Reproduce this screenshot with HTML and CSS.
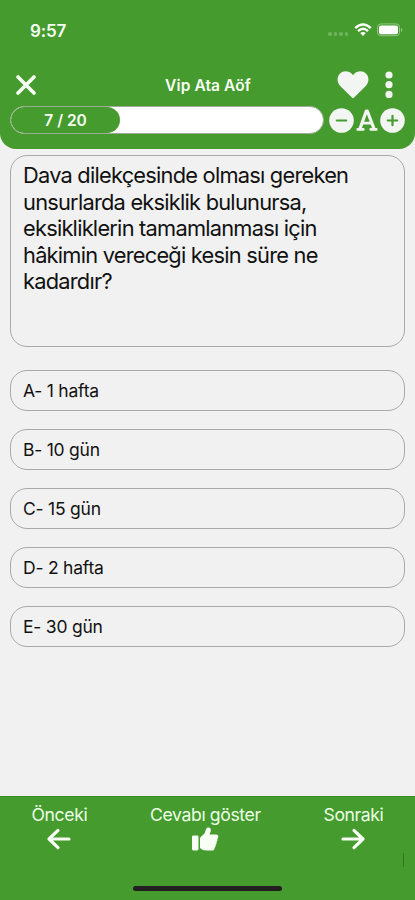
FILE: index.html
```html
<!DOCTYPE html>
<html lang="tr">
<head>
<meta charset="utf-8">
<meta name="viewport" content="width=device-width, initial-scale=1">
<title>Vip Ata Aöf</title>
<link rel="stylesheet" href="styles.css">
</head>
<body>
<div class="app">
  <header class="header">
    <div class="status">
      <span class="time">9:57</span>
      <span class="cell"><i></i><i></i><i></i><i></i></span>
      <svg class="wifi" width="18" height="14" viewBox="0 0 18 14" fill="none" stroke="#fff" stroke-width="2.400"><path d="M1.200 5.100Q9-2 16.800 5.100M4 8.100Q9 3.500 14 8.100"/><path d="M9 12.900L6.200 10.100Q9 7.900 11.800 10.100Z" fill="#fff" stroke="none"/></svg>
      <svg class="battery" width="26" height="14" viewBox="0 0 26 14"><rect x=".5" y=".9" width="22" height="11.800" rx="3.400" fill="none" stroke="#94c886"/><rect x="2" y="2.400" width="19" height="8.800" rx="2" fill="#fff"/><path d="M24 5v4q1.400-.6 1.400-2T24 5Z" fill="#94c886"/></svg>
    </div>
    <div class="titlebar">
      <svg class="close" width="20" height="20" viewBox="0 0 20 20" stroke="#f8fff5" stroke-width="3.600" stroke-linecap="round"><path d="M2 2L18 18M18 2L2 18"/></svg>
      <h1 class="title">Vip Ata Aöf</h1>
      <svg class="heart" width="32" height="28" viewBox="0 0 32 28" fill="#f3f5f2"><path d="M14.900 26.600L3.200 15C-.4 11.300-.2 5.800 3 2.600 6.600-.8 12-.2 15 3.100L16 4.200 17 3.100C20-.2 25.400-.8 29 2.600 32.200 5.800 32.400 11.300 28.800 15L17.100 26.600Q16 27.700 14.900 26.600Z"/></svg>
      <svg class="more" width="8" height="28" viewBox="0 0 8 28" fill="#f3f5f2"><circle cx="4" cy="4" r="3.600"/><circle cx="4" cy="13.700" r="3.600"/><circle cx="4" cy="23.400" r="3.600"/></svg>
    </div>
    <div class="tools">
      <div class="progress"><div class="fill" style="width:35%">7 / 20</div></div>
      <svg class="round" width="25" height="25" viewBox="0 0 25 25"><circle cx="12.500" cy="12.500" r="12.300" fill="#f3f5f2"/><path d="M7.800 12.500H17.200" stroke="#459b2e" stroke-width="2.200" stroke-linecap="round"/></svg>
      <svg class="font" width="22" height="22" viewBox="0 0 22 22" fill="none" stroke="#f3f5f2" stroke-linecap="round"><path d="M4 19.800L10.300 2H11.300L18 19.800" stroke-width="3.200" stroke-linejoin="round"/><path d="M1.700 20.400H7.300M14.700 20.400H20.300M6.500 14.200H15.500" stroke-width="2.700"/></svg>
      <svg class="round" width="25" height="25" viewBox="0 0 25 25"><circle cx="12.500" cy="12.500" r="12.300" fill="#f3f5f2"/><path d="M7.800 12.500H17.200M12.500 7.800V17.200" stroke="#459b2e" stroke-width="2.200" stroke-linecap="round"/></svg>
    </div>
  </header>
  <main class="main">
    <section class="question">Dava dilekçesinde olması gereken<br>unsurlarda eksiklik bulunursa,<br>eksikliklerin tamamlanması için<br>hâkimin vereceği kesin süre ne<br>kadardır?</section>
    <ul class="answers">
      <li>A- 1 hafta</li>
      <li>B- 10 gün</li>
      <li>C- 15 gün</li>
      <li>D- 2 hafta</li>
      <li>E- 30 gün</li>
    </ul>
  </main>
  <footer class="footer">
    <nav class="nav">
      <a class="prev"><span>Önceki</span><svg width="26" height="24" viewBox="0 0 26 24" fill="none" stroke="#f8fff5" stroke-width="3.200" stroke-linecap="round" stroke-linejoin="round"><path d="M23 12H3M12 3.400L3 12L12 20.600"/></svg></a>
      <a class="show"><span>Cevabı göster</span><svg width="28" height="24" viewBox="0 0 28 24" fill="#f8fff5"><rect x="1" y="8.500" width="6.500" height="15" rx="1.400"/><path d="M9 10.700L13.600 6.200 15.200 1.700Q16 .2 17.700.4C20 .8 20.300 3 19.500 5L18.500 7.400H25Q27.500 7.600 27.300 10C27.200 11 26.700 11.400 26.400 11.800Q26.900 13.600 25.600 14.900 26 16.500 24.700 17.900 24.900 19.600 23.700 20.700 23.500 23.500 20.500 23.600H15.500Q11.500 23.500 9 21Z"/></svg></a>
      <a class="next"><span>Sonraki</span><svg width="26" height="24" viewBox="0 0 26 24" fill="none" stroke="#f8fff5" stroke-width="3.200" stroke-linecap="round" stroke-linejoin="round"><path d="M3 12H23M14 3.400L23 12L14 20.600"/></svg></a>
    </nav>
    <i class="mark"></i>
    <div class="home"></div>
  </footer>
</div>
</body>
</html>
```
FILE: styles.css
```css
* { box-sizing: border-box; }
body { margin: 0; background: #f1f1f1; font-family: Inter, "Liberation Sans", sans-serif; color: #111; }
svg { display: block; flex: none; }
.app { width: 415px; height: 900px; display: flex; flex-direction: column; overflow: hidden; }
.header { height: 149px; flex: none; background: #459b2e; border-radius: 0 0 16px 16px; color: #f8fff5; }
.status { height: 60px; padding: 0 7px 0 30px; display: flex; align-items: center; }
.time { font-size: 17px; font-weight: 600; width: 298px; letter-spacing: -.2px; padding-top: 1px; }
.cell { display: flex; gap: 2px; width: 26px; padding-top: 8px; }
.cell i { width: 3.500px; height: 3.500px; border-radius: 50%; background: #71b45f; }
.battery { margin-left: 5px; }
.titlebar { height: 50px; padding: 0 22px 0 16px; display: flex; align-items: center; }
.title { flex: 1; margin: 0 -20px 0 23px; padding-top: 1px; text-align: center; font-size: 15.500px; line-height: 20px; font-weight: 600; letter-spacing: .1px; }
.heart { margin-right: 16px; }
.tools { height: 28px; margin-top: -4px; padding: 0 10px; display: flex; align-items: center; }
.progress { width: 314px; height: 28px; border: 1px solid #9cac97; border-radius: 14px; background: #fff; overflow: hidden; margin-right: 5px; }
.fill { height: 100%; border-radius: 13px; background: #459b2e; text-align: center; font-size: 15.500px; line-height: 27px; font-weight: 600; }
.font { margin: 0 2px; }
.main { flex: 1; padding: 6px 10px 0; }
.question { height: 192px; border: 1px solid #a9a9a9; border-radius: 17px; padding: 6px 12px; font-size: 21.800px; line-height: 26.500px; letter-spacing: -.76px; white-space: nowrap; }
.answers { list-style: none; margin: 23px 0 0; padding: 0; display: grid; gap: 18px; }
.answers li { height: 41px; border: 1px solid #a9a9a9; border-radius: 17px; padding: 0 12px; line-height: 39px; font-size: 17.500px; letter-spacing: -.23px; }
.footer { height: 104px; background: #459b2e; position: relative; color: #edffe6; border-top: 1px solid #348d20; }
.nav { display: flex; justify-content: space-between; padding: 7px 31.500px 0; font-size: 17.600px; line-height: 22px; letter-spacing: -.38px; }
.nav a { display: flex; flex-direction: column; align-items: center; gap: 1px; }
.mark { position: absolute; right: 11px; top: 56px; width: 1px; height: 14px; background: #32751f; }
.home { position: absolute; left: 133px; bottom: 9px; width: 149px; height: 5px; border-radius: 3px; background: #221f23; }
```
